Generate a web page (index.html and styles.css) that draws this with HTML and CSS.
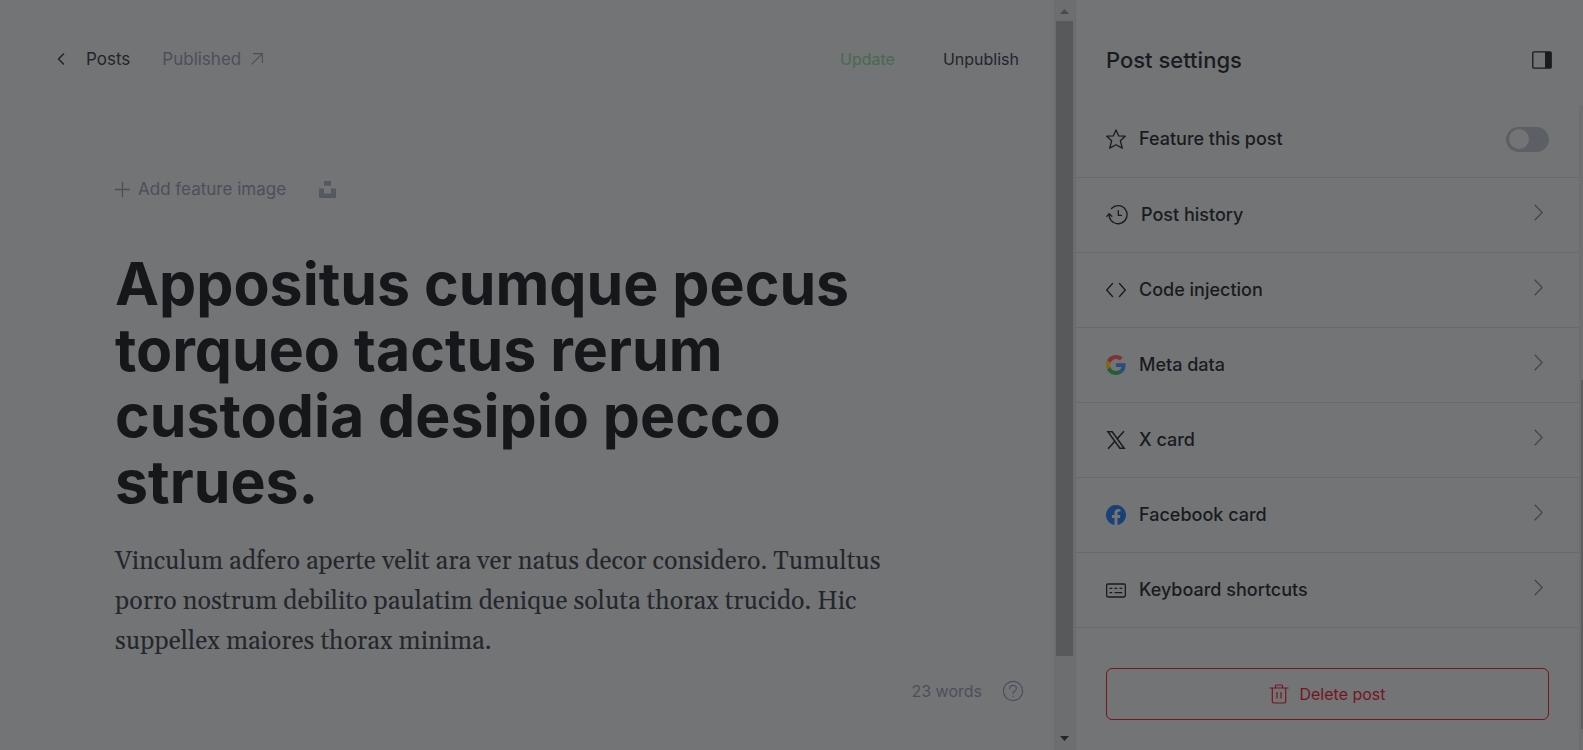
FILE: index.html
```
<!DOCTYPE html>
<html lang="en">
<head>
<meta charset="utf-8">
<title>Post editor</title>
<link rel="stylesheet" href="styles.css">
</head>
<body>
<div class="app">
  <main class="editor">
    <header class="topbar">
      <nav class="group">
        <a class="back" href="#"><svg width="8" height="12" viewBox="0 0 8 12"><path d="M6.5 1 1.5 6l5 5" fill="none" stroke="currentColor" stroke-width="1.6" stroke-linecap="round" stroke-linejoin="round"/></svg>Posts</a>
        <a class="status" href="#">Published<svg width="12" height="12" viewBox="0 0 12 12"><path d="M.6 11.4 11.4.6M2 .6h9.4V10" fill="none" stroke="currentColor" stroke-width="1.1"/></svg></a>
      </nav>
      <div class="group actions">
        <button class="update" type="button">Update</button>
        <button class="unpublish" type="button">Unpublish</button>
      </div>
    </header>
    <article class="post">
      <div class="feature">
        <button class="add" type="button"><svg width="15" height="15" viewBox="0 0 15 15"><path d="M7.5 0v15M0 7.5h15" stroke="currentColor" stroke-width="1.3"/></svg>Add feature image</button>
        <button class="unsplash" type="button" aria-label="Unsplash"><svg width="17" height="17" viewBox="0 0 17 17"><path d="M5 0h7v4.8H5zM0 7.5h5v5h7v-5h5V17H0z" fill="currentColor"/></svg></button>
      </div>
      <h1 class="title">Appositus cumque pecus torqueo tactus rerum custodia desipio pecco strues.</h1>
      <p class="body">Vinculum adfero aperte velit ara ver natus decor considero. Tumultus porro nostrum debilito paulatim denique soluta thorax trucido. Hic suppellex maiores thorax minima.</p>
    </article>
    <footer class="footer">
      <span>23 words</span>
      <a href="#" class="help" aria-label="Help"><svg width="22" height="22" viewBox="0 0 22 22" fill="none" stroke="currentColor" stroke-linecap="round"><circle cx="11" cy="11" r="9.6" stroke-width="1.1"/><path d="M7.6 8.7c0-2 1.4-3.3 3.4-3.3s3.4 1.2 3.4 3c0 2.6-3.4 2.5-3.4 5" stroke-width="1.1"/><circle cx="11" cy="16.2" r=".8" fill="currentColor" stroke="none"/></svg></a>
    </footer>
  </main>
  <div class="scrollbar">
    <svg class="arrow up" width="9" height="5" viewBox="0 0 9 5"><path d="M0 5 4.5 0 9 5z" fill="currentColor"/></svg>
    <div class="track"><div class="thumb"></div></div>
    <svg class="arrow down" width="9" height="5" viewBox="0 0 9 5"><path d="M0 0h9L4.500 5z" fill="currentColor"/></svg>
  </div>
  <aside class="settings">
    <header class="settings-head">
      <h2>Post settings</h2>
      <button type="button" aria-label="Toggle settings"><svg width="20" height="18" viewBox="0 0 20 18"><rect x=".8" y=".8" width="18.400" height="16.400" rx="1.200" fill="none" stroke="currentColor" stroke-width="1.300"/><path d="M13 1h6v16h-6z" fill="currentColor"/></svg></button>
    </header>
    <div class="panel">
      <div class="list">
        <div class="row first">
          <svg class="icon" width="20" height="20" viewBox="0 0 20 20"><path d="M10 .9 12.700 6.900l6.500.3-4.900 4.500 2 7.400L10 15.700l-6.300 3.400 2-7.400L.8 7.200l6.500-.3z" fill="none" stroke="currentColor" stroke-width="1.300" stroke-linejoin="round"/></svg>
          <label for="feature">Feature this post</label>
          <input id="feature" class="toggle" type="checkbox">
        </div>
        <button class="row" type="button">
          <svg class="icon" width="22" height="20" viewBox="0 0 22 20" fill="none" stroke="currentColor" stroke-width="1.300" stroke-linecap="round" stroke-linejoin="round"><path d="M5.500 3.500A9 9 0 1 1 3.300 11.800L3.200 8.800M.8 11.400l2.400-2.800 2.600 2.600M12.300 5.600v4.800h3.200"/></svg>
          <span>Post history</span><svg class="chevron" width="9" height="17" viewBox="0 0 9 17"><path d="M.7.7 8.200 8.500.7 16.300"/></svg>
        </button>
        <button class="row" type="button">
          <svg class="icon" width="20" height="20" viewBox="0 0 20 20" fill="none" stroke="currentColor" stroke-width="1.300" stroke-linecap="round" stroke-linejoin="round"><path d="M6.500 3.500.7 10l5.800 6.500M13.500 3.500 19.300 10l-5.800 6.500"/></svg>
          <span>Code injection</span><svg class="chevron" width="9" height="17" viewBox="0 0 9 17"><path d="M.7.7 8.200 8.500.7 16.300"/></svg>
        </button>
        <button class="row" type="button">
          <svg class="icon" width="20" height="20" viewBox="0 0 48 48"><path fill="#7f322f" d="M24 9.500c3.540 0 6.710 1.220 9.210 3.600l6.850-6.850C35.900 2.380 30.470 0 24 0 14.620 0 6.510 5.380 2.560 13.220l7.980 6.190C12.430 13.720 17.740 9.500 24 9.500z"/><path fill="#2e4b80" d="M46.980 24.550c0-1.570-.15-3.090-.38-4.550H24v9.020h12.940c-.58 2.960-2.260 5.480-4.780 7.180l7.730 6c4.510-4.180 7.090-10.360 7.090-17.650z"/><path fill="#836717" d="M10.530 28.590c-.48-1.450-.76-2.990-.76-4.590s.27-3.140.76-4.590l-7.980-6.190C.92 16.460 0 20.120 0 24c0 3.880.92 7.540 2.560 10.780z"/><path fill="#275c37" d="M24 48c6.480 0 11.930-2.130 15.890-5.810l-7.730-6c-2.150 1.450-4.920 2.300-8.160 2.300-6.260 0-11.570-4.220-13.470-9.910l-7.980 6.190C6.510 42.620 14.620 48 24 48z"/></svg>
          <span>Meta data</span><svg class="chevron" width="9" height="17" viewBox="0 0 9 17"><path d="M.7.7 8.200 8.500.7 16.300"/></svg>
        </button>
        <button class="row" type="button">
          <svg class="icon" width="20" height="20" viewBox="0 0 20 20" fill="none" stroke="currentColor" stroke-width="1.500"><path d="M1.900 1.700h4.300l12 16.600h-4.300zM18 1.200l-7.200 8M9 11l-6.900 7.800"/></svg>
          <span>X card</span><svg class="chevron" width="9" height="17" viewBox="0 0 9 17"><path d="M.7.7 8.200 8.500.7 16.300"/></svg>
        </button>
        <button class="row" type="button">
          <svg class="icon" width="20" height="20" viewBox="0 0 24 24"><path fill="#194176" d="M24 12.070C24 5.440 18.630.070 12 .070S0 5.440 0 12.070c0 5.990 4.390 10.950 10.130 11.850v-8.380H7.080v-3.470h3.050V9.430c0-3.010 1.790-4.670 4.530-4.670 1.310 0 2.690.24 2.690.24v2.950h-1.510c-1.490 0-1.960.93-1.960 1.870v2.250h3.330l-.53 3.470h-2.800v8.380C19.610 23.020 24 18.060 24 12.070z"/></svg>
          <span>Facebook card</span><svg class="chevron" width="9" height="17" viewBox="0 0 9 17"><path d="M.7.7 8.200 8.500.7 16.300"/></svg>
        </button>
        <button class="row" type="button">
          <svg class="icon" width="20" height="20" viewBox="0 0 20 20" fill="none" stroke="currentColor" stroke-width="1.300"><rect x=".65" y="4" width="18.700" height="13" rx="1.400"/><path d="M3.500 8.300h2.800M8.500 8.300h2.800M13.500 8.300h2.800M3.500 12.700h2.800M8.500 12.700h7.800"/></svg>
          <span>Keyboard shortcuts</span><svg class="chevron" width="9" height="17" viewBox="0 0 9 17"><path d="M.7.7 8.200 8.500.7 16.300"/></svg>
        </button>
        <button class="delete" type="button"><svg width="20" height="20" viewBox="0 0 20 20" fill="none" stroke="currentColor" stroke-width="1.200" stroke-linejoin="round"><path d="M.5 4h19M3.300 4v13.600q0 1.400 1.400 1.400h10.600q1.400 0 1.400-1.400V4M6.500 4V2.200q0-1.200 1.200-1.200h4.600q1.200 0 1.200 1.200V4M8 8v6.500M12 8v6.500"/></svg>Delete post</button>
      </div>
      <div class="mini-track"><div class="mini-thumb"></div></div>
    </div>
  </aside>
</div>
</body>
</html>
```
FILE: styles.css
```
* { box-sizing: border-box; }
body {
  margin: 0;
  background: #727476;
  color: #191b1f;
  font-family: Inter, "Liberation Sans", sans-serif;
}
button {
  padding: 0;
  border: 0;
  background: none;
  color: inherit;
  font: inherit;
  text-align: left;
}
a { color: inherit; text-decoration: none; }
svg { display: block; flex: none; }
.app { display: flex; min-height: 100vh; }

.editor { flex: 1; display: flex; flex-direction: column; }
.topbar {
  display: flex;
  justify-content: space-between;
  padding: 48px 35px 0 57px;
  font-size: 17px;
  line-height: 22px;
}
.group { display: flex; gap: 32px; }
.actions { gap: 48px; font-size: 16px; }
.back, .status { display: flex; align-items: center; }
.back { gap: 21px; color: #22252b; }
.status { gap: 10px; color: #4a5058; }
.update { color: #476a4e; }
.unpublish { color: #22252b; }
.post { flex: 1; padding: 108px 115px 0; }
.feature {
  display: flex;
  align-items: center;
  gap: 33px;
  color: #4a5058;
  font-size: 17px;
  line-height: 22px;
}
.add { display: flex; align-items: center; gap: 8px; }
.unsplash { color: #54585f; }
.title {
  margin: 51px 0 0;
  color: #15171a;
  font-size: 59px;
  font-weight: 700;
  line-height: 66px;
}
.body {
  margin: 27px 0 0;
  color: #24272c;
  font-family: Georgia, Gelasio, "Liberation Serif", serif;
  font-size: 25px;
  line-height: 40px;
}
.footer {
  display: flex;
  align-items: center;
  justify-content: flex-end;
  gap: 20px;
  padding: 0 30px 48px;
  color: #4a5058;
  font-size: 16px;
  line-height: 22px;
}

.scrollbar {
  width: 22px;
  display: flex;
  flex-direction: column;
  align-items: center;
  padding: 9px 1px 9px 0;
  background: #6c6e70;
  border-right: 1px solid #696b6e;
}
.up { color: #4a4b4d; }
.down { color: #252628; }
.track { flex: 1; width: 17px; padding: 7px 0; }
.thumb { height: 89.7%; background: #58595b; }

.settings { width: 507px; display: flex; flex-direction: column; }
.settings-head {
  display: flex;
  align-items: center;
  justify-content: space-between;
  height: 105px;
  padding: 15px 31px 0 30px;
}
.settings-head h2 {
  margin: 0;
  font-size: 22px;
  font-weight: 500;
  line-height: 28px;
}
.panel { flex: 1; display: flex; }
.list { flex: 1; display: flex; flex-direction: column; }
.row {
  display: flex;
  align-items: center;
  gap: 13px;
  width: 100%;
  height: 75px;
  padding: 0 36px 0 30px;
  border-bottom: 1px solid #67696c;
  font-size: 18px;
  font-weight: 500;
  line-height: 24px;
}
.first { height: 73px; padding: 0 30px 4px; }
.chevron {
  margin: 0 0 5px auto;
  fill: none;
  stroke: #41464f;
  stroke-width: 1.3;
}
.toggle {
  appearance: none;
  display: flex;
  align-items: center;
  width: 43px;
  height: 25px;
  margin: 0 0 0 auto;
  padding: 3px;
  border-radius: 13px;
  background: #5c6064;
}
.toggle::before {
  content: "";
  width: 20px;
  height: 20px;
  border-radius: 50%;
  background: #727476;
}
.delete {
  display: flex;
  align-items: center;
  justify-content: center;
  gap: 10px;
  height: 52px;
  margin: 40px 30px 30px;
  border: 1px solid #77151f;
  border-radius: 6px;
  color: #77151f;
  font-size: 16px;
}
.mini-track {
  width: 4px;
  display: flex;
  flex-direction: column;
  align-items: flex-end;
  justify-content: flex-end;
  padding-bottom: 21px;
  background: #6c6e70;
}
.mini-thumb { width: 2px; height: 56%; background: #5b5c5e; }
```
